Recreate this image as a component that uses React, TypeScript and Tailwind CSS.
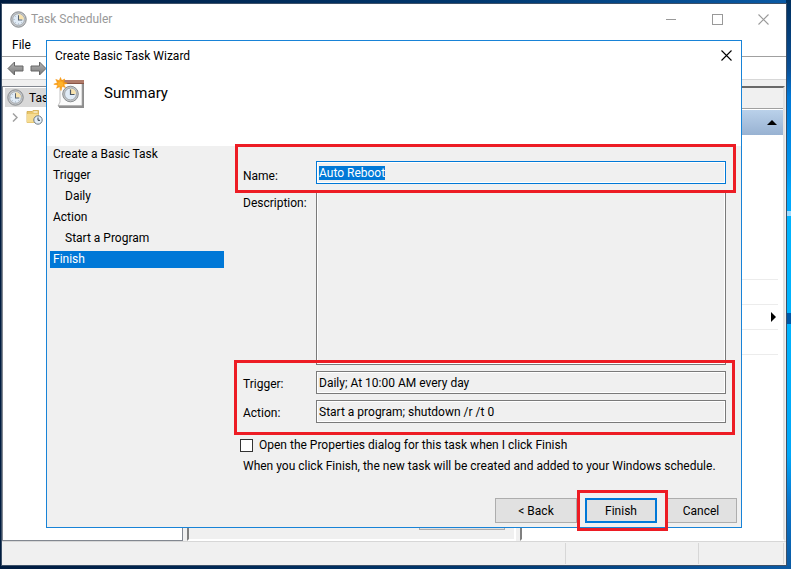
import React from "react";

const steps = [
    { label: "Create a Basic Task" },
    { label: "Trigger" },
    { label: "Daily", nested: true },
    { label: "Action" },
    { label: "Start a Program", nested: true },
    { label: "Finish", active: true },
];

const ClockIcon = ({ className }: { className?: string }) => (
    <svg viewBox="0 0 18 18" className={className} aria-hidden="true">
        <circle cx="9" cy="9" r="8.2" fill="#c3c6c9" stroke="#7c8083" strokeWidth=".9" />
        <circle cx="9" cy="9" r="6.1" fill="#e1ecf7" stroke="#94989b" strokeWidth=".7" />
        <path d="M9 9V3.2A5.8 5.8 0 0 1 14.8 9Z" fill="#f8e3ae" />
        <path d="M9 4.5V9.5H13" fill="none" stroke="#5a6470" strokeWidth="1.1" />
        <path d="M9 14.2v-1M3.8 9h1M5.3 5.3l.6.6M5.3 12.7l.6-.6M12.7 12.7l-.6-.6" stroke="#7a8a9a" strokeWidth=".7" />
    </svg>
);

const TaskIcon = () => (
    <svg viewBox="0 0 32 32" className="size-8 shrink-0" aria-hidden="true">
        <path d="M28 6h3v25H6v-2h22z" fill="#8d8d8d" />
        <path d="M7 5h22v23l-1 1H5l2-4z" fill="#fbfbfb" stroke="#a9a9a9" strokeWidth=".7" />
        <path d="M5 28.500h23v1H5z" fill="#8a8a8a" />
        <path d="M7 3h24v4H7z" fill="#b07c6b" />
        <path d="M7 6h24v1H7z" fill="#8a5546" />
        <circle cx="17.500" cy="17" r="7.800" fill="#c3c6c9" stroke="#808487" strokeWidth=".9" />
        <circle cx="17.500" cy="17" r="5.900" fill="#e1ecf7" stroke="#94989b" strokeWidth=".8" />
        <path d="M17.500 17v-5.500A5.500 5.500 0 0 1 23 17z" fill="#f8e3ae" />
        <path d="M17.500 12.500v5H21.500" fill="none" stroke="#4a5560" strokeWidth="1.200" />
        <path
            d="M7.500.5l1.200 3.200 3-1.700-1 3.300 3.500.9-3.500 1.300 1.700 3-3.300-1.200-1.100 4.200-1.200-4-3.200 1.700 1.300-3.200L.8 7.200l3.700-1.500L2.800 2.500l3.500 1.200z"
            fill="#f9a11b"
            stroke="#f6930c"
            strokeWidth=".6"
        />
        <circle cx="7.500" cy="7" r="2.600" fill="#ffb22a" />
    </svg>
);

const FolderIcon = () => (
    <svg viewBox="0 0 17 16" className="h-4 w-[17px] shrink-0" aria-hidden="true">
        <path d="M1 2.500h5l1-1h5.500v12H1z" fill="#e9c76c" stroke="#d1a94a" strokeWidth=".8" />
        <path d="M7.500 3h4" stroke="#fff" />
        <path d="M1 5h11.500v8.500H1z" fill="#f6dc91" />
        <circle cx="12" cy="11" r="4.200" fill="#e4eef8" stroke="#6e7b84" />
        <path d="M12 8.500V11.300H14" fill="none" stroke="#33414d" />
    </svg>
);

const ArrowIcon = ({ flip }: { flip?: boolean }) => (
    <svg viewBox="0 0 17 15" className={flip ? "h-[15px] w-[17px] -scale-x-100" : "h-[15px] w-[17px]"} aria-hidden="true">
        <defs>
            <linearGradient id="arrow" x1="0" y1="0" x2="0" y2="1">
                <stop offset="0" stopColor="#b5b5b5" />
                <stop offset="1" stopColor="#7a7a7a" />
            </linearGradient>
        </defs>
        <path d="M1 7.500 7.500 1v4H16v5H7.500v4z" fill="url(#arrow)" stroke="#666" strokeLinejoin="round" />
    </svg>
);

const CrossIcon = () => (
    <svg viewBox="0 0 11 11" className="size-[11px]" aria-hidden="true">
        <path d="M.5.5l10 10M10.500.5l-10 10" stroke="currentColor" strokeWidth="1.100" />
    </svg>
);

// red annotation frame
const Marker = ({ className }: { className: string }) => (
    <div className={`pointer-events-none absolute border-3 border-[#ed1c24] ${className}`} />
);

const field = "block w-full resize-none border border-[#7a7a7a] bg-[#f0f0f0] px-[2px] shadow-[inset_0_0_0_1px_#fff] outline-none";
const button = "h-[25px] bg-[#e1e1e1] text-center";

const MainWindow = () => (
    <div className="flex flex-1 flex-col border border-[#3c5068] bg-white">
        <header className="flex h-[30px] items-center pl-2 text-[#999]">
            <ClockIcon className="size-[17px]" />
            <h1 className="ml-1 flex-1">Task Scheduler</h1>
            <button aria-label="Minimize" className="flex w-[46px] justify-center">
                <span className="h-px w-[10px] bg-[#999]" />
            </button>
            <button aria-label="Maximize" className="flex w-[46px] justify-center">
                <span className="size-[11px] border border-[#999]" />
            </button>
            <button aria-label="Close" className="flex w-[46px] justify-center">
                <CrossIcon />
            </button>
        </header>
        <nav className="flex h-[23px] items-center border-b border-[#a0a0a0] pl-[10px]">
            <button>File</button>
        </nav>
        <div className="flex h-[23px] items-center gap-[6px] border-b border-[#d7d7d7] pt-px pl-[5px]">
            <button aria-label="Back">
                <ArrowIcon />
            </button>
            <button aria-label="Forward">
                <ArrowIcon flip />
            </button>
        </div>
        <div className="flex flex-1 gap-1 bg-[#f0f0f0] pt-[6px]">
            <aside className="w-[181px] shrink-0 border border-[#828790] bg-white pl-[2px]">
                <div className="mt-px flex h-[19px] items-center bg-[#d9d9d9] pl-[2px]">
                    <ClockIcon className="size-[17px]" />
                    <span className="ml-[5px]">Tas</span>
                </div>
                <div className="flex h-5 items-center gap-[8px] pl-[7px]">
                    <svg viewBox="0 0 6 9" className="h-[9px] w-[6px]" aria-hidden="true">
                        <path d="M1 .5l4 4-4 4" fill="none" stroke="#a0a0a0" strokeWidth="1.500" />
                    </svg>
                    <FolderIcon />
                </div>
            </aside>
            <main className="flex flex-1 items-end justify-end border-2 border-t-[#696969] border-r-white border-b-white border-l-[#808080] pr-[9px] pb-[9px]">
                <span className="h-[26px] w-[86px] border border-[#adadad] bg-[#e1e1e1]" />
            </main>
            <aside className="mr-px w-[265px] shrink-0 border-2 border-t-[#696969] border-r-[#e3e3e3] border-b-white border-l-[#808080] bg-white">
                <div className="h-[21px] border-b border-[#a0a0a0] bg-[#f0f0f0]" />
                <div className="mt-px flex h-[25px] items-center justify-end bg-linear-to-b from-[#bad1ea] to-[#98b2d2] pr-[6px]">
                    <svg viewBox="0 0 10 5" className="h-[5px] w-[10px]" aria-hidden="true">
                        <path d="M0 5 5 0l5 5z" />
                    </svg>
                </div>
                <ul className="mt-[144px] mr-[5px] border-t border-[#ececec]">
                    <li className="h-[25px] border-b border-[#ececec]" />
                    <li className="flex h-[25px] items-center justify-end border-b border-[#ececec] pr-[2px]">
                        <svg viewBox="0 0 5 10" className="h-[10px] w-[5px]" aria-hidden="true">
                            <path d="M0 0l5 5-5 5z" />
                        </svg>
                    </li>
                    <li className="h-[25px] border-b border-[#ececec]" />
                </ul>
            </aside>
        </div>
        <footer className="flex h-[24px] border-t border-[#d7d7d7] bg-[#f0f0f0] py-px pr-[2px]">
            <span className="flex-1 border-r border-[#d7d7d7]" />
            <span className="w-[133px] border-r border-[#d7d7d7]" />
            <span className="w-[85px] border-r border-[#d7d7d7]" />
        </footer>
    </div>
);

const Wizard = () => (
    <section
        role="dialog"
        aria-labelledby="wizard-title"
        className="absolute top-10 right-[49px] bottom-[41px] left-[46px] flex flex-col border border-[#1883d7] bg-[#f0f0f0]"
    >
        <header className="h-[105px] bg-white">
            <div className="flex h-[29px] items-center justify-between pr-[9px] pl-2">
                <h2 id="wizard-title">Create Basic Task Wizard</h2>
                <button aria-label="Close wizard">
                    <CrossIcon />
                </button>
            </div>
            <div className="flex h-[46px] items-center gap-[19px] pl-[6px]">
                <TaskIcon />
                <h3 className="text-[15px]">Summary</h3>
            </div>
        </header>
        <div className="flex flex-1">
            <ol className="flex w-[196px] shrink-0 flex-col gap-1 pr-[19px] pl-[3px]">
                {steps.map(step => (
                    <li
                        key={step.label}
                        className={`h-[17px] leading-4 ${step.nested ? "pl-[15px]" : "pl-[3px]"} ${
                            step.active ? "bg-[#0078d7] text-white" : ""
                        }`}
                    >
                        {step.label}
                    </li>
                ))}
            </ol>
            <form className="flex flex-1 flex-col pt-[15px] pr-[15px]" onSubmit={e => e.preventDefault()}>
                <div className="relative z-10 flex">
                    <label htmlFor="name" className="w-[73px] pt-[7px]">
                        Name:
                    </label>
                    <div className="h-[23px] flex-1">
                        <input
                            id="name"
                            readOnly
                            autoFocus
                            defaultValue="Auto Reboot"
                            onFocus={e => e.target.select()}
                            className={`${field} h-[23px] selection:bg-[#0078d7] selection:text-white focus:border-[#0078d7]`}
                        />
                    </div>
                    <Marker className="-top-[17px] -right-[10px] -left-2 h-[49px]" />
                </div>
                <div className="mt-[6px] flex flex-1">
                    <label htmlFor="description" className="w-[73px] pt-[5px]">
                        Description:
                    </label>
                    <textarea id="description" readOnly className={`${field} h-full w-auto flex-1`} />
                </div>
                <div className="relative mt-[6px] flex flex-col gap-[6px]">
                    <div className="flex">
                        <label htmlFor="trigger" className="w-[73px] pt-[5px]">
                            Trigger:
                        </label>
                        <div className="h-[23px] flex-1">
                            <input id="trigger" readOnly defaultValue="Daily; At 10:00 AM every day" className={`${field} h-[23px]`} />
                        </div>
                    </div>
                    <div className="flex">
                        <label htmlFor="action" className="w-[73px] pt-[5px]">
                            Action:
                        </label>
                        <div className="h-[23px] flex-1">
                            <input id="action" readOnly defaultValue="Start a program; shutdown /r /t 0" className={`${field} h-[23px]`} />
                        </div>
                    </div>
                    <Marker className="-top-[11px] -right-[9px] -bottom-3 -left-[9px]" />
                </div>
                <div className="mt-[15px] -ml-[3px] flex h-[14px] items-center gap-[6px]">
                    <input id="open-props" type="checkbox" className="size-[13px] appearance-none border border-[#333] bg-white" />
                    <label htmlFor="open-props">Open the Properties dialog for this task when I click Finish</label>
                </div>
                <p className="mt-[6px]">When you click Finish, the new task will be created and added to your Windows schedule.</p>
            </form>
        </div>
        <footer className="mt-6 flex justify-end pr-1 pb-1">
            <button className={`${button} w-[82px] border border-[#adadad]`}>&lt; Back</button>
            <div className="relative mx-2">
                <button className={`${button} w-[72px] border-2 border-[#0078d7]`}>Finish</button>
                <Marker className="-top-2 -right-[11px] -bottom-2 -left-2" />
            </div>
            <button className={`${button} w-[72px] border border-[#adadad]`}>Cancel</button>
        </footer>
    </section>
);

export default function App() {
    return (
        <div className="relative flex min-h-screen flex-col bg-[linear-gradient(to_right,#001c40,#00386f_60%,#0a5aa5)] font-['Roboto',sans-serif] text-[12px] leading-4 text-black">
            {/* desktop showing past the window's right edge */}
            <div className="absolute inset-y-0 right-0 w-[5px] bg-[linear-gradient(to_bottom,#00305f_0,#0a4f96_12%,#0078d7_17%,#0096f0_30%,#00aaff_34%,#00aaff_37%,#a0dcff_37%,#a0dcff_38%,#00b4ff_38%,#00b4ff_55%,#0058a8_55%,#0058a8_57%,#00b4ff_57%,#00a8fa_80%,#0a78d0_88%,#0a58a0_100%)]" />
            <div className="relative flex flex-1 flex-col pt-[3px] pr-1 pb-[3px] pl-px">
                <MainWindow />
            </div>
            <Wizard />
        </div>
    );
}
